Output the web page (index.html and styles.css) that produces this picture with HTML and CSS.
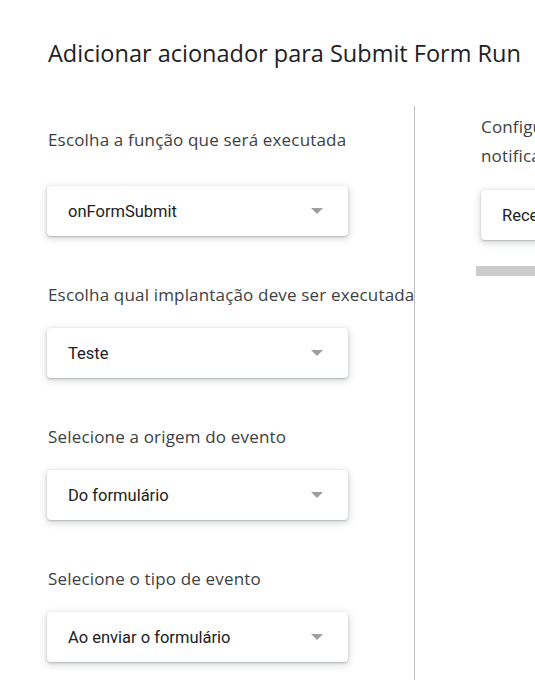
FILE: index.html
```html
<!DOCTYPE html>
<html lang="pt-BR">
<head>
<meta charset="utf-8">
<title>Adicionar acionador</title>
<link rel="stylesheet" href="styles.css">
</head>
<body>
<div class="dialog">
  <h1 class="title">Adicionar acionador para Submit Form Run</h1>
  <div class="columns">
    <div class="col col-left">
      <div class="field field-first">
        <div class="label">Escolha a função que será executada</div>
        <div class="select"><span class="value">onFormSubmit</span><span class="arrow"></span></div>
      </div>
      <div class="field">
        <div class="label">Escolha qual implantação deve ser executada</div>
        <div class="select"><span class="value">Teste</span><span class="arrow"></span></div>
      </div>
      <div class="field">
        <div class="label">Selecione a origem do evento</div>
        <div class="select"><span class="value">Do formulário</span><span class="arrow"></span></div>
      </div>
      <div class="field">
        <div class="label">Selecione o tipo de evento</div>
        <div class="select"><span class="value">Ao enviar o formulário</span><span class="arrow"></span></div>
      </div>
    </div>
    <div class="col col-right">
      <div class="label label-wrap">Configurações de notificação de falha</div>
      <div class="select select-right"><span class="value">Receber notificações diariamente</span><span class="arrow"></span></div>
      <div class="bar"></div>
    </div>
  </div>
</div>
</body>
</html>
```

FILE: styles.css
```css
html, body {
  margin: 0;
  padding: 0;
  background: #ffffff;
  overflow: hidden;
}

.dialog {
  width: 535px;
  height: 694px;
  overflow: hidden;
  padding-left: 48px;
  box-sizing: border-box;
}

.title {
  margin: 37px 0 0 0;
  font-family: "Open Sans", "Liberation Sans", sans-serif;
  font-weight: 500;
  font-size: 23.5px;
  line-height: 32px;
  color: #202124;
  white-space: nowrap;
}

.columns {
  display: flex;
  margin-top: 37px;
  width: 700px;
}

.col-left {
  width: 367px;
  flex: none;
  padding-top: 22px;
  border-right: 1px solid #bdbdbd;
  height: 574px;
  box-sizing: border-box;
}

.col-right {
  flex: none;
  width: 300px;
  padding-left: 66px;
  padding-top: 6px;
}

.label {
  font-family: "Open Sans", "Liberation Sans", sans-serif;
  font-size: 17px;
  letter-spacing: 0.17px;
  line-height: 24px;
  color: #3c4043;
  white-space: nowrap;
}

.label-wrap {
  white-space: normal;
  width: 200px;
  line-height: 29px;
}

.field {
  margin-bottom: 47px;
}

.field .label {
  margin-bottom: 21px;
}

.field-first .label {
  margin-bottom: 34px;
}

.select {
  width: 301px;
  height: 50px;
  box-sizing: border-box;
  margin-left: -1px;
  border-radius: 4px;
  background: #ffffff;
  box-shadow: 0 1px 2px 0 rgba(60, 64, 67, 0.3), 0 2px 6px 2px rgba(60, 64, 67, 0.15);
  display: flex;
  align-items: center;
  padding: 0 25px 0 21px;
}

.select-right {
  margin-left: 0;
  margin-top: 20px;
}

.value {
  flex: 1;
  font-family: Roboto, "Liberation Sans", sans-serif;
  font-size: 16.5px;
  color: #202124;
  white-space: nowrap;
}

.arrow {
  width: 0;
  height: 0;
  border-left: 6.5px solid transparent;
  border-right: 6.5px solid transparent;
  border-top: 6px solid #9e9e9e;
  flex: none;
}

.bar {
  margin-top: 26px;
  margin-left: -5px;
  width: 200px;
  height: 10px;
  background: #cccccc;
}
```
